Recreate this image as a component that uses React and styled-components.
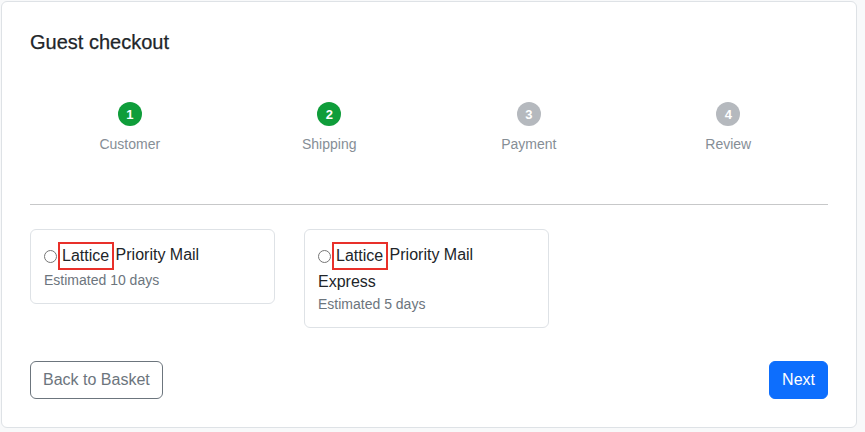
import React from "react";
import styled, { createGlobalStyle } from "styled-components";

const Global = createGlobalStyle`
  html, body { margin: 0; padding: 0; background: #f8f9fa; }
  body { font-family: "Liberation Sans", Arial, sans-serif; color: #212529; }
  * { box-sizing: border-box; }
`;

const Page = styled.div`
  padding: 1px 8px 4px 1px;
`;

const Card = styled.div`
  background: #fff;
  border: 1px solid #dee2e6;
  border-radius: 6px;
  padding: 28px;
  height: 427px;
  display: flex;
  flex-direction: column;
`;

const Title = styled.h2`
  margin: 0;
  font-size: 20px;
  line-height: 24px;
  font-weight: 500;
  color: #212529;
  -webkit-text-stroke: 0.25px #212529;
`;

const Steps = styled.div`
  margin-top: 48px;
  display: grid;
  grid-template-columns: repeat(4, 1fr);
`;

const Step = styled.div`
  display: flex;
  flex-direction: column;
  align-items: center;
`;

const Dot = styled.div`
  width: 24px;
  height: 24px;
  border-radius: 50%;
  background: ${(p) => (p.$done ? "#0f9d3a" : "#b5b9be")};
  color: #fff;
  font-size: 13px;
  font-weight: 700;
  display: flex;
  align-items: center;
  justify-content: center;
`;

const StepLabel = styled.div`
  margin-top: 8px;
  font-size: 14px;
  line-height: 21px;
  color: #868e96;
`;

const Rule = styled.hr`
  margin: 49px 0 0;
  border: 0;
  border-top: 1px solid #c7c8c9;
`;

const Options = styled.div`
  margin-top: 24px;
  display: flex;
  gap: 29px;
  align-items: flex-start;
`;

const Option = styled.label`
  width: 245px;
  border: 1px solid #dee2e6;
  border-radius: 6px;
  padding: 12px 13px 12px;
  display: block;
`;

const OptionTitle = styled.div`
  font-size: 16px;
  line-height: 24px;
  color: #212529;
`;

const Radio = styled.input`
  appearance: none;
  width: 13px;
  height: 13px;
  margin: 0 1px 0 0;
  border: 1px solid #767676;
  border-radius: 50%;
  vertical-align: middle;
  background: #fff;
`;

const Brand = styled.span`
  display: inline-block;
  vertical-align: middle;
  line-height: 24px;
  border: 2px solid #e8302a;
  padding: 0 3px 0 2px;
  margin-right: -3px;
`;

const Estimate = styled.div`
  font-size: 14px;
  line-height: 21px;
  color: #6c757d;
`;

const Actions = styled.div`
  margin-top: 33px;
  display: flex;
  justify-content: space-between;
`;

const Button = styled.button`
  font-family: inherit;
  font-size: 16px;
  line-height: 24px;
  padding: 6px 12px;
  border-radius: 6px;
  border: 1px solid ${(p) => (p.$primary ? "#0d6efd" : "#6c757d")};
  background: ${(p) => (p.$primary ? "#0d6efd" : "#fff")};
  color: ${(p) => (p.$primary ? "#fff" : "#6c757d")};
  cursor: pointer;
`;

const steps = [
  { n: 1, label: "Customer", done: true },
  { n: 2, label: "Shipping", done: true },
  { n: 3, label: "Payment", done: false },
  { n: 4, label: "Review", done: false },
];

const options = [
  { name: "Priority Mail", days: "Estimated 10 days" },
  { name: "Priority Mail Express", days: "Estimated 5 days" },
];

export default function App() {
  return (
    <>
      <Global />
      <Page>
        <Card>
          <Title>Guest checkout</Title>
          <Steps>
            {steps.map((s) => (
              <Step key={s.n}>
                <Dot $done={s.done}>{s.n}</Dot>
                <StepLabel>{s.label}</StepLabel>
              </Step>
            ))}
          </Steps>
          <Rule />
          <Options>
            {options.map((o) => (
              <Option key={o.name}>
                <OptionTitle>
                  <Radio type="radio" name="ship" />
                  <Brand>Lattice</Brand> {o.name}
                </OptionTitle>
                <Estimate>{o.days}</Estimate>
              </Option>
            ))}
          </Options>
          <Actions>
            <Button>Back to Basket</Button>
            <Button $primary>Next</Button>
          </Actions>
        </Card>
      </Page>
    </>
  );
}
